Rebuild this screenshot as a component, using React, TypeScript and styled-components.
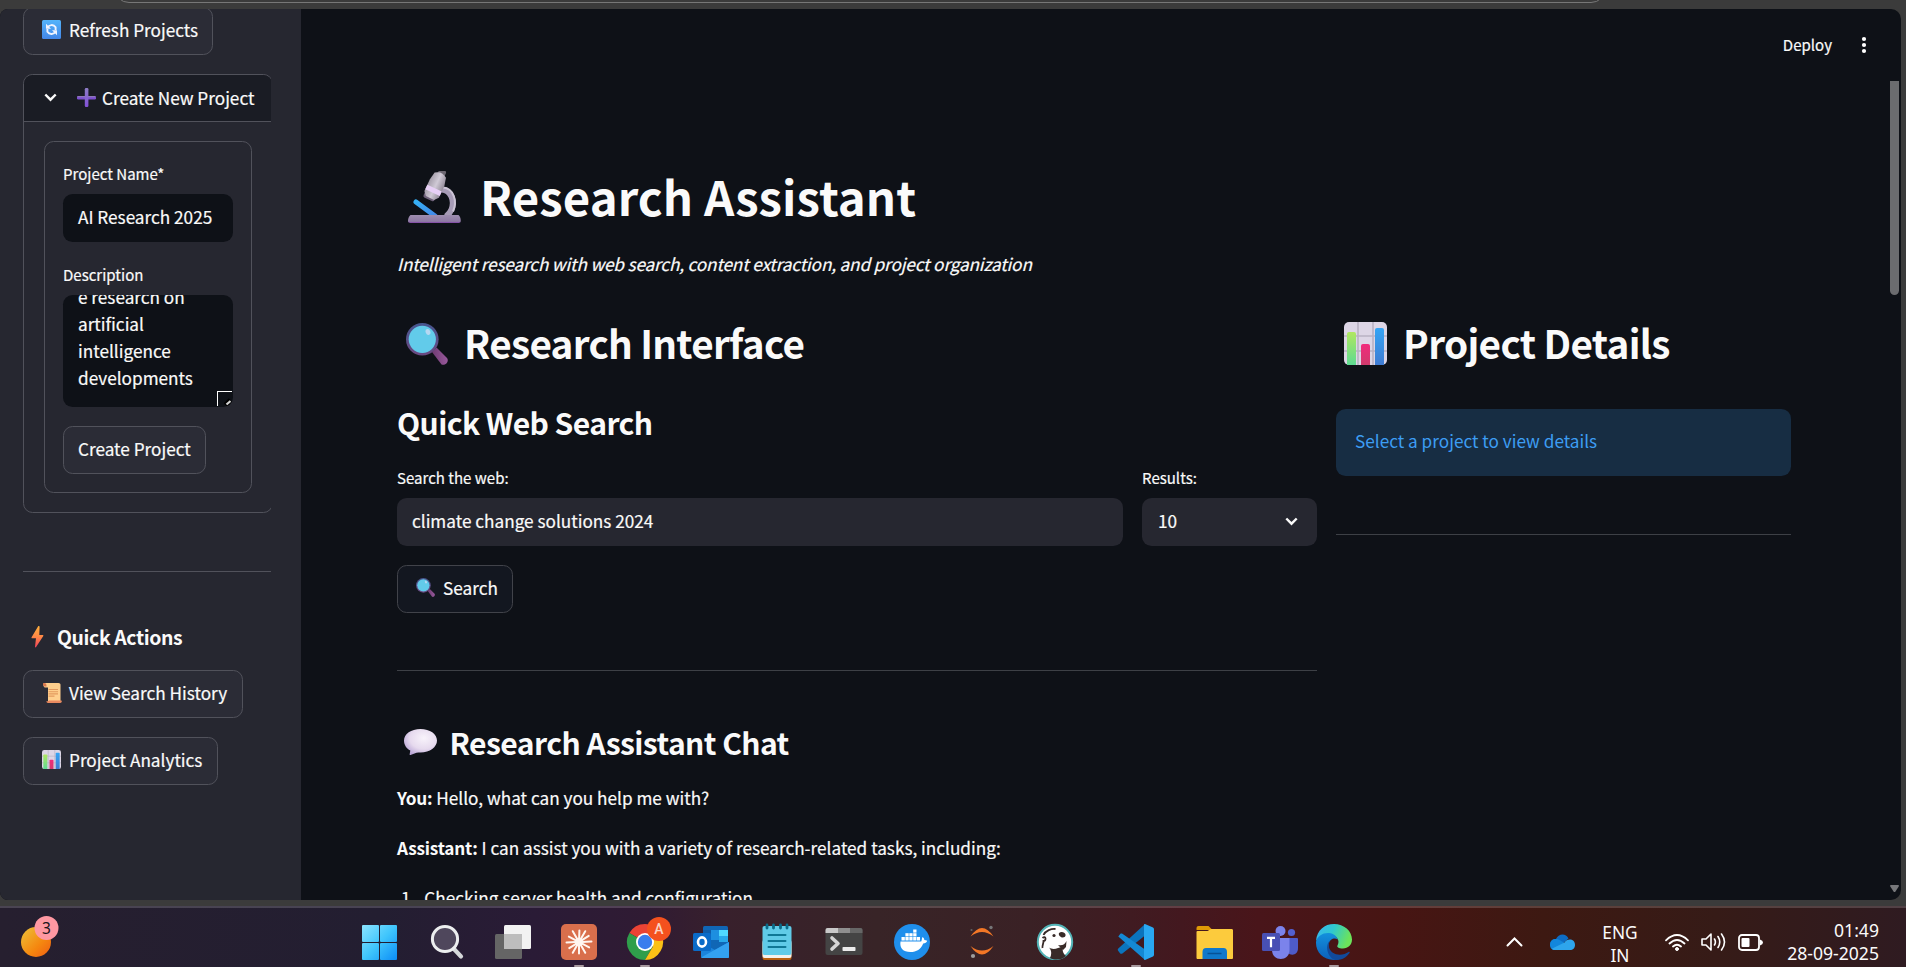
import React from 'react';
import styled, { createGlobalStyle } from 'styled-components';

const GlobalStyle = createGlobalStyle`
  * { box-sizing: border-box; }
  html, body { margin: 0; padding: 0; background: #3b3b3b; overflow: hidden; }
  body { font-family: "Noto Sans CJK SC", "Noto Sans", sans-serif; color: #fafafa; font-size: 17.2px; }
  svg { display: block; flex: none; }
`;

const Screen = styled.div`
  width: 1906px;
  height: 967px;
  display: flex;
  flex-direction: column;
  overflow: hidden;
  background: #3b3b3b;
`;
const Chrome = styled.div`
  height: 9px;
  flex: none;
  padding-left: 114px;
  overflow: hidden;
`;
const AddressBar = styled.div`
  width: 1492px;
  height: 30px;
  margin-top: -27px;
  border: 1px solid #777;
  border-radius: 15px;
`;
const Window = styled.div`
  width: 1901px;
  height: 891px;
  flex: none;
  display: flex;
  overflow: hidden;
  border-radius: 8px 10px 10px 8px;
  background: #0e1117;
  -webkit-text-stroke: 0.2px currentColor;
`;
const Sidebar = styled.aside`
  width: 301px;
  flex: none;
  background: #262730;
  padding-left: 23px;
  display: flex;
  flex-direction: column;
  align-items: flex-start;
`;
const Button = styled.div<{ $w: number; $mt: number; $dark?: boolean; $pl?: number }>`
  width: ${p => p.$w}px;
  height: 48px;
  flex: none;
  margin-top: ${p => p.$mt}px;
  padding: 0 0 ${p => (p.$dark ? 4 : 3)}px ${p => p.$pl ?? 15}px;
  display: flex;
  align-items: center;
  border: 1px solid ${p => (p.$dark ? '#41434a' : '#51525b')};
  border-radius: 9.6px;
  background: ${p => (p.$dark ? '#131720' : '#2b2c36')};
  white-space: nowrap;
`;
const IconSlot = styled.span<{ $l?: number; $w: number; $t?: number }>`
  width: ${p => p.$w}px;
  flex: none;
  padding-left: ${p => p.$l ?? 0}px;
  padding-top: ${p => p.$t ?? 0}px;
`;
const Label = styled.span<{ $ls?: number }>`
  letter-spacing: ${p => p.$ls ?? 0}px;
  white-space: nowrap;
`;
const ExpanderClip = styled.div`
  width: 248px;
  margin-top: 19px;
  overflow: hidden;
  flex: none;
`;
const Expander = styled.section`
  width: 250px;
  height: 439px;
  border: 1px solid #51525b;
  border-radius: 9.6px;
  overflow: hidden;
`;
const ExpanderHead = styled.div`
  height: 47px;
  display: flex;
  align-items: center;
  padding: 0 0 2px 20px;
  background: #1a1c24;
  border-bottom: 1px solid #51525b;
`;
const Form = styled.div`
  width: 208px;
  height: 352px;
  margin: 19px 0 0 20px;
  padding: 20px 18px 0;
  border: 1px solid #51525b;
  border-radius: 9.6px;
`;
const FieldLabel = styled.div<{ $mt?: number }>`
  height: 23px;
  line-height: 23px;
  margin-top: ${p => p.$mt ?? 0}px;
  font-size: 15.04px;
  white-space: nowrap;
`;
const Field = styled.div<{ $mt: number; $bg?: string; $pl?: number }>`
  height: 48px;
  margin-top: ${p => p.$mt}px;
  padding: 0 19px 4px ${p => p.$pl ?? 15}px;
  display: flex;
  align-items: center;
  justify-content: space-between;
  border-radius: 9.6px;
  background: ${p => p.$bg ?? '#262730'};
  white-space: nowrap;
`;
const TextArea = styled.div`
  position: relative;
  height: 112px;
  margin-top: 9px;
  padding-left: 15px;
  border-radius: 9.6px;
  background: #0e1117;
  overflow: hidden;
`;
const TextAreaBody = styled.div`
  margin-top: -11px;
  line-height: 26.88px;
  width: 140px;
`;
const ResizeGrip = styled.div`
  position: absolute;
  right: 1px;
  bottom: 1px;
  width: 15px;
  height: 15px;
  border-left: 1px solid #fff;
  border-top: 1px solid #fff;
`;
const Rule = styled.div<{ $w: number; $mt: number; $side?: boolean }>`
  width: ${p => p.$w}px;
  height: 1px;
  flex: none;
  margin-top: ${p => p.$mt}px;
  background: ${p => (p.$side ? '#51525b' : '#3d4046')};
`;
const SideHeading = styled.div`
  height: 30px;
  margin-top: 49px;
  display: flex;
  align-items: center;
  font-size: 19.4px;
  font-weight: 600;
  letter-spacing: -0.37px;
  -webkit-text-stroke: 0;
`;

const Main = styled.main`
  flex: 1;
  height: 891px;
  overflow: hidden;
`;
const TopBar = styled.header`
  height: 72px;
  display: flex;
  align-items: center;
  justify-content: flex-end;
  padding: 0 22px 1px 0;
  font-size: 15.04px;
  gap: 29px;
`;
const Content = styled.div`
  padding-left: 96px;
`;
const Heading = styled.div<{ $h: number; $mt: number; $fs: number; $ls?: number }>`
  height: ${p => p.$h}px;
  margin-top: ${p => p.$mt}px;
  font-size: ${p => p.$fs}px;
  letter-spacing: ${p => p.$ls ?? 0}px;
  line-height: ${p => p.$h}px;
  font-weight: 600;
  display: flex;
  align-items: center;
  white-space: nowrap;
  -webkit-text-stroke: 0;
`;
const Paragraph = styled.p<{ $mt: number; $ls?: number; $italic?: boolean }>`
  height: 31px;
  line-height: 31px;
  margin: ${p => p.$mt}px 0 0;
  font-style: ${p => (p.$italic ? 'italic' : 'normal')};
  letter-spacing: ${p => p.$ls ?? 0}px;
  white-space: nowrap;
  b { letter-spacing: -0.2px; -webkit-text-stroke: 0; }
`;
const Columns = styled.div`
  display: grid;
  grid-template-columns: 920px 455px;
  column-gap: 19px;
  align-items: start;
`;
const SearchRow = styled.div`
  display: grid;
  grid-template-columns: 726px 175px;
  column-gap: 19px;
`;
const Notice = styled.div`
  height: 67px;
  margin-top: 40px;
  padding: 0 0 4px 19px;
  display: flex;
  align-items: center;
  border-radius: 9.6px;
  background: #172d43;
  color: #3d9df3;
  -webkit-text-stroke: 0;
`;
const ListItem = styled(Paragraph)`
  display: flex;
  gap: 9px;
  padding-left: 4px;
`;
const ScrollTrack = styled.div`
  width: 12px;
  height: 891px;
  flex: none;
  display: flex;
  flex-direction: column;
  align-items: flex-start;
  justify-content: space-between;
  padding: 72px 0 8px 1px;
`;
const ScrollThumb = styled.div`
  width: 9px;
  height: 214px;
  background: #6b6c6f;
  border-radius: 0 0 5px 5px;
`;

const Taskbar = styled.footer`
  height: 61px;
  flex: none;
  margin-top: 6px;
  border-top: 2px solid rgba(255, 255, 255, 0.17);
  background: linear-gradient(90deg, #261f2f 0%, #231e31 20%, #2a1b36 28%, #301b33 34%, #38202c 38%, #382427 46%, #3a2125 54%, #43181f 62%, #49151a 66%, #471513 73%, #3d1912 81%, #361b17 90%, #2f1b21 100%);
  display: flex;
  align-items: flex-start;
  font-family: "Noto Sans", sans-serif;
`;
const TaskItem = styled.div<{ $ml: number; $active?: boolean; $pt?: number }>`
  width: 44px;
  height: 59px;
  flex: none;
  margin-left: ${p => p.$ml}px;
  padding-top: ${p => p.$pt ?? 4}px;
  display: flex;
  flex-direction: column;
  gap: 5px;
  align-items: center;
  &::after {
    content: '';
    width: 10px;
    height: 4px;
    border-radius: 2px;
    background: ${p => (p.$active ? '#a89a9f' : 'transparent')};
  }
`;
const Tray = styled.div`
  margin-left: auto;
  height: 59px;
  display: flex;
  align-items: center;
  padding: 9px 27px 0 0;
  line-height: 23.5px;
`;
const TrayText = styled.div<{ $w: number; $ml: number; $align: string; $pt?: number; $fs?: number }>`
  width: ${p => p.$w}px;
  margin-left: ${p => p.$ml}px;
  padding-top: ${p => p.$pt ?? 0}px;
  font-size: ${p => p.$fs ?? 17.6}px;
  text-align: ${p => p.$align};
  white-space: nowrap;
`;
const TraySlot = styled.div<{ $ml: number }>`
  margin-left: ${p => p.$ml}px;
`;

const RefreshIcon = () => (
  <svg width="19" height="19" viewBox="0 0 19 19">
    <defs><linearGradient id="rf" x1="0" y1="0" x2="0" y2="1"><stop offset="0" stopColor="#54b4fb" /><stop offset="1" stopColor="#4386e8" /></linearGradient></defs>
    <rect width="19" height="19" rx="1.5" fill="url(#rf)" />
    <g fill="none" stroke="#f1f4ff" strokeWidth="1.9">
      <path d="M5.6 7.6C7 4.6 11.5 4 13.6 7.2V10" />
      <path d="M13.6 11.4C12 14.6 7.6 15 5.4 11.8V9" />
    </g>
    <path d="M4 3.8v5h5zM15 15.2v-5h-5z" fill="#f1f4ff" />
  </svg>
);
const PlusIcon = () => (
  <svg width="19" height="19" viewBox="0 0 19 19">
    <defs><linearGradient id="pl" x1="0" y1="0" x2="0" y2="1"><stop offset="0" stopColor="#8d7cc4" /><stop offset="1" stopColor="#8250d8" /></linearGradient></defs>
    <rect x="0" y="8" width="19" height="3.4" rx="1.2" fill="#7d4fd0" />
    <rect x="0.4" y="8" width="18" height="1.3" rx=".6" fill="#8d78b8" />
    <rect x="7.8" y="0" width="3.6" height="19" rx="1.2" fill="url(#pl)" />
  </svg>
);
const BoltIcon = () => (
  <svg width="13" height="22" viewBox="0 0 13 22">
    <defs><linearGradient id="bo" x1="0" y1="0" x2="0" y2="1"><stop offset="0" stopColor="#ffb03c" /><stop offset=".5" stopColor="#ff8746" /><stop offset="1" stopColor="#f2405c" /></linearGradient></defs>
    <path d="M7 .4 .6 11.2c-.3.6 0 1 .6 1H5L4 20.8c0 .9.6 1 1.1.3L12.3 10c.3-.6 0-1-.6-1H8.3L8.6 1c0-1-1.1-1.300-1.600-.6z" fill="url(#bo)" />
  </svg>
);
const ScrollIcon = () => (
  <svg width="19" height="20" viewBox="0 0 19 20">
    <path d="M1 0h14.500c1.200 0 2 .8 2 1.800V18H5V4.500H2C.4 4.500-.2 1 1 0z" fill="#ffcf8d" />
    <path d="M0 .8C0 .3.6 0 1.200 0 3 0 3.500 1 3.500 3.500H1.500C.6 3.500 0 2 0 .8z" fill="#d9774e" />
    <path d="M6 17.500h12.500c.8 1.500-.2 2.500-1.300 2.500H5c-1 0-1.700-1-1.500-2 1 .5 1.800.3 2.500-.5z" fill="#e98a60" />
    <path d="M5.500 6.500h9.500M5.500 8.700h9.500M5.500 10.900h9.500M5.500 13.100h6" stroke="#e39a5e" strokeWidth="1.100" />
  </svg>
);
const ChartIcon = ({ s }: { s: number }) => (
  <svg width={s} height={s} viewBox="0 0 43 43">
    <defs>
      <linearGradient id="cg" x1="0" y1="0" x2="0" y2="1"><stop offset="0" stopColor="#b1e760" /><stop offset="1" stopColor="#5edb92" /></linearGradient>
      <linearGradient id="cb" x1="0" y1="0" x2="0" y2="1"><stop offset="0" stopColor="#35a5f5" /><stop offset="1" stopColor="#3f7bd2" /></linearGradient>
      <linearGradient id="cr" x1="0" y1="0" x2="0" y2="1"><stop offset="0" stopColor="#f12a7c" /><stop offset="1" stopColor="#d13a6c" /></linearGradient>
    </defs>
    <rect width="43" height="43" rx="5" fill="#ddd6e6" />
    <path d="M14 0v43M29 0v43M0 14h43M0 29h43" stroke="#b9b2c4" strokeWidth="1.600" />
    <path d="M3 43V12a2 2 0 0 1 2-2h5a2 2 0 0 1 2 2v31z" fill="url(#cg)" />
    <path d="M17 43V24a2 2 0 0 1 2-2h5a2 2 0 0 1 2 2v19z" fill="url(#cr)" />
    <path d="M31 43V8a2 2 0 0 1 2-2h5a2 2 0 0 1 2 2v35z" fill="url(#cb)" />
  </svg>
);
const GlassIcon = ({ s }: { s: number }) => (
  <svg width={s} height={s} viewBox="0 0 42 42">
    <defs>
      <linearGradient id="gh" x1="0" y1="0" x2="1" y2="0"><stop offset="0" stopColor="#6f3b72" /><stop offset="1" stopColor="#98599c" /></linearGradient>
      <linearGradient id="gr" x1="0" y1="0" x2="0" y2="1"><stop offset="0" stopColor="#46568f" /><stop offset="1" stopColor="#6b4880" /></linearGradient>
    </defs>
    <path d="M26 29l4.500-4.500 10.500 10.500c2.500 3-1.500 8-5.500 6.500z" fill="url(#gh)" />
    <circle cx="16.300" cy="16.300" r="16.300" fill="url(#gr)" />
    <circle cx="16.300" cy="16.300" r="13.600" fill="#62cbea" />
    <ellipse cx="22" cy="9" rx="2.300" ry="3" fill="#b6d8f2" transform="rotate(-25 22 9)" />
  </svg>
);
const MicroscopeIcon = () => (
  <svg width="53" height="52" viewBox="0 0 53 52">
    <defs>
      <linearGradient id="mb" x1="0" y1="0" x2="1" y2="0"><stop offset="0" stopColor="#a49daa" /><stop offset=".5" stopColor="#d0cad6" /><stop offset="1" stopColor="#948c9a" /></linearGradient>
      <linearGradient id="ms" x1="0" y1="0" x2="0" y2="1"><stop offset="0" stopColor="#9e8eb0" /><stop offset=".8" stopColor="#8e7aa4" /><stop offset="1" stopColor="#8040a8" /></linearGradient>
      <linearGradient id="ml" x1="0" y1="0" x2="1" y2="1"><stop offset="0" stopColor="#35b0f5" /><stop offset="1" stopColor="#4388e8" /></linearGradient>
    </defs>
    <path d="M34 18.500c9 1 13 11 9.500 20-1 2.500-3 5-5.500 7" fill="none" stroke="#a69bb6" strokeWidth="6" />
    <path d="M35 16.500c11 1 14.500 14 10 24" fill="none" stroke="#cbc3d4" strokeWidth="2" />
    <path d="M8 31l19 14" stroke="url(#ml)" strokeWidth="5" strokeLinecap="round" />
    <path d="M2.500 44h48c1.500 1 2.500 4 2.200 6.300-.1 1-.8 1.700-2 1.700H2.300C1 52 .2 51.500 0 50.300-.2 48 1 45 2.500 44z" fill="url(#ms)" />
    <g transform="rotate(25 27 15)">
      <rect x="24" y="-3" width="7.500" height="8" rx="2" fill="#6d6872" />
      <rect x="20.500" y="23" width="12" height="7" rx="2" fill="#6d6078" />
      <path d="M21 3q6-5 12.500 0l2 8v13l-3.500 4h-9l-3.500-4V11z" fill="url(#mb)" />
      <path d="M19.500 17h16v5h-16z" fill="#e7d0f6" />
    </g>
  </svg>
);
const BubbleIcon = () => (
  <svg width="33" height="26" viewBox="0 0 33 26">
    <defs><radialGradient id="bu" cx=".6" cy=".35" r=".7"><stop offset="0" stopColor="#f8f3fb" /><stop offset=".6" stopColor="#e6daee" /><stop offset="1" stopColor="#b9a5d6" /></radialGradient></defs>
    <path d="M16.500 0C26 0 33 5 33 11.500S26 23.500 16.500 23.500c-1.500 0-2.700 0-4 .2L6.500 26c-.8.200-1-.300-.8-1l.6-3.500C2.500 19.500 0 16 0 11.500 0 5 7 0 16.500 0z" fill="url(#bu)" />
  </svg>
);
const Chevron = () => (
  <svg width="13" height="9" viewBox="0 0 13 9"><path d="M1.300 1.500l5.200 5.200 5.200-5.200" fill="none" stroke="#fafafa" strokeWidth="2.400" /></svg>
);

const Ico = ({ children }: { children: React.ReactNode }) => (
  <svg width="44" height="48" viewBox="0 0 44 48">{children}</svg>
);
const StartIcon = () => (
  <Ico>
    <defs><linearGradient id="wn" gradientUnits="userSpaceOnUse" x1="4" y1="13" x2="40" y2="48"><stop offset="0" stopColor="#8be4ff" /><stop offset=".5" stopColor="#3fc5fc" /><stop offset="1" stopColor="#0a8bf6" /></linearGradient></defs>
    <g fill="url(#wn)"><rect x="4" y="13" width="17" height="17" rx="1" /><rect x="22" y="13" width="17" height="17" rx="1" /><rect x="4" y="31" width="17" height="17" rx="1" /><rect x="22" y="31" width="17" height="17" rx="1" /></g>
  </Ico>
);
const SearchTaskIcon = () => (
  <Ico>
    <path d="M29 37l7 7.500" stroke="#d5d8da" strokeWidth="4.200" strokeLinecap="round" />
    <circle cx="20" cy="27" r="12.600" fill="#4f475c" stroke="#eceeef" strokeWidth="3" />
  </Ico>
);
const TaskViewIcon = () => (
  <Ico>
    <rect x="4" y="22" width="27" height="25" rx="1.500" fill="#656565" />
    <rect x="13" y="13" width="27" height="24" rx="1.500" fill="#f2f2f2" />
    <path d="M13 22h18v15H14q-1 0-1-1z" fill="#bdbdbd" />
  </Ico>
);
const ClaudeIcon = () => (
  <Ico>
    <rect x="4" y="12" width="36" height="36" rx="5" fill="#d96f4c" />
    <g stroke="#fff6f0" strokeWidth="2" strokeLinecap="round">
      {[2, 30, 58, 88, 118, 150, 180, 210, 238, 268, 298, 330].map((a, i) => (
        <path key={a} d={`M22 27V${i % 2 ? 17.5 : 18.5}`} transform={`rotate(${a} 22 30)`} />
      ))}
    </g>
    <circle cx="22" cy="30" r="4" fill="#fff6f0" />
  </Ico>
);
const ChromeIcon = () => (
  <svg width="56" height="48" viewBox="0 0 56 48">
    <path d="M28 30L12.400 21A18 18 0 0 1 43.600 21z" fill="#ea4335" />
    <path d="M28 30L12.400 21A18 18 0 0 0 28 48l8-13.500z" fill="#2f9e4b" />
    <path d="M28 30L43.600 21A18 18 0 0 1 28 48l8-13.500z" fill="#fbc116" />
    <path d="M28 21h15.600l1 2H28z" fill="#ea4335" />
    <circle cx="28" cy="30" r="9" fill="#fff" /><circle cx="28" cy="30" r="7.200" fill="#3b7ded" />
    <circle cx="42" cy="17" r="12" fill="#f4511e" />
    <text x="42" y="22" textAnchor="middle" fontSize="14" fontWeight="500" fontFamily="Roboto" fill="#fbd3c4">A</text>
  </svg>
);
const OutlookIcon = () => (
  <Ico>
    <rect x="14" y="14" width="25" height="24" rx="1.500" fill="#1066b5" />
    <path d="M14 18h8v10h-8z" fill="#0f5ca8" /><path d="M22 18h8v10h-8z" fill="#1d8fe0" /><path d="M30 18h9v6h-9z" fill="#50d9ff" /><path d="M30 24h9v6h-9z" fill="#28a8ea" />
    <path d="M12 30l14 8 14-8v14.500c0 1-.6 1.500-1.500 1.500h-25c-1 0-1.500-.6-1.500-1.500z" fill="#1a84dc" />
    <path d="M12 45.500L40 30v14.500c0 1-.6 1.500-1.500 1.500h-25z" fill="#33a1f0" />
    <rect x="4" y="21" width="18" height="18" rx="1.500" fill="#0a6bc8" />
    <ellipse cx="13" cy="30" rx="4" ry="4.600" fill="none" stroke="#fff" strokeWidth="2.600" />
  </Ico>
);
const NotepadIcon = () => (
  <Ico>
    <rect x="7.500" y="30" width="29" height="18" rx="2" fill="#b9600f" /><rect x="7.500" y="28" width="29" height="18" rx="2" fill="#f4f1ec" />
    <rect x="7.500" y="14" width="29" height="29" rx="2" fill="#60cbe8" />
    <path d="M12 13v3M18.500 13v3M25.500 13v3M32 13v3" stroke="#0b6b88" strokeWidth="2.800" strokeLinecap="round" />
    <path d="M13.500 23h17M13.500 29h17M13.500 35h17" stroke="#0f7896" strokeWidth="2" strokeLinecap="round" />
  </Ico>
);
const TerminalIcon = () => (
  <Ico>
    <rect x="3.500" y="16" width="37" height="27" rx="2" fill="#444" />
    <path d="M3.500 21v-3q0-2 2-2H16v5z" fill="#c9c9c9" /><path d="M16 16h12v5H16z" fill="#8f8f8f" /><path d="M28 16h10.500q2 0 2 2v3H28z" fill="#666" />
    <path d="M10 26l6 5.500-6 5.500" fill="none" stroke="#d4d4d4" strokeWidth="3.600" strokeLinecap="round" strokeLinejoin="round" />
    <rect x="20.500" y="35" width="13" height="4" rx=".8" fill="#ececec" />
  </Ico>
);
const DockerIcon = () => (
  <Ico>
    <circle cx="22" cy="30" r="18" fill="#1f8fec" />
    <path d="M10.500 29.500h20.700c.8-1 .4-3 1.300-4.500 1.500.8 1.800 2 1.800 3 1 0 2 .2 2.900.8-.6 1.800-2 2.600-4 2.600C31 37 26.500 40 20.500 40 13 40 9.500 36 10.500 29.500z" fill="#fff" />
    <g fill="#fff"><rect x="11.500" y="25" width="3.300" height="3.500" /><rect x="15.400" y="25" width="3.300" height="3.500" /><rect x="19.300" y="25" width="3.300" height="3.500" /><rect x="23.200" y="25" width="3.300" height="3.500" /><rect x="27" y="25" width="3" height="3.500" /><rect x="15.400" y="21.200" width="3.300" height="3.200" /><rect x="19.300" y="21.200" width="3.300" height="3.200" /><rect x="23.200" y="21.200" width="3.300" height="3.200" /><rect x="23.200" y="17.500" width="3.300" height="3.100" /></g>
  </Ico>
);
const JupyterIcon = () => (
  <Ico>
    <path d="M10.500 24.500q11.500-17 23 0-11.500-9-23 0z" fill="#f37726" /><path d="M10.500 34q11.500 17 23 0-11.500 9-23 0z" fill="#f37726" />
    <circle cx="31" cy="15.500" r="1.700" fill="#767677" /><circle cx="13" cy="44" r="2.100" fill="#9e9e9e" /><circle cx="11.500" cy="18" r="1.100" fill="#616262" />
  </Ico>
);
const BeaverIcon = () => (
  <Ico>
    <circle cx="22" cy="30" r="17.200" fill="#fff" stroke="#52b3b6" strokeWidth="2" />
    <path d="M10.500 23c2-4.500 8-6.500 12-6M9.500 26c1.500-1.500 3-1 3 .5s-1 2.500-2 2.500c0 3-1.500 4.500-1 7" fill="none" stroke="#382b28" strokeWidth="1.800" />
    <path d="M26 21c2.500-2 6-.5 6.500 1.500s-1 3-3 3S25 23 26 21z" fill="#382b28" /><circle cx="21" cy="23.500" r="1.600" fill="#382b28" />
    <path d="M17 46c2-4 1.500-8-1-10.500 3 2 6 1.500 9 .5l5-1.500c-1 4 0 7 3 9.500-4 4-11 4.500-16 2z" fill="#382b28" />
    <path d="M25 33c4 1 7-.5 8.500-4l-.5 6-3 3z" fill="#382b28" />
  </Ico>
);
const CodeIcon = () => (
  <Ico>
    <path d="M30 13L4.300 36.500c-.7.700-.7 1.700 0 2.500l1.900 2.400c.6.600 1.500.600 2.200.1L31 23.500z" fill="#0b74bd" />
    <path d="M4.300 24.500l1.900-2.600c.6-.6 1.500-.6 2.200-.1L31 37.500V48z" fill="#1489d4" />
    <path d="M30 12.300l1-.3 8 3.500c.7.400 1 .9 1 1.700v25.600c0 .8-.4 1.300-1 1.700L31 48l-1-.6z" fill="#29a8f2" />
  </Ico>
);
const FolderIcon = () => (
  <Ico>
    <path d="M3.500 16q0-2 2-2h10l4 4h-16z" fill="#df9a06" /><path d="M3.500 20q0-1 1-1h10l3.500-2H39q1 0 1 1.500V46q0 1-1 1H4.500q-1 0-1-1z" fill="#fccb3d" />
    <path d="M9.500 47v-7q0-4 3.500-4h17.500q3.500 0 3.500 4v7z" fill="#0f78cb" /><path d="M14.500 41.500h14" stroke="#075296" strokeWidth="1.500" />
  </Ico>
);
const TeamsIcon = () => (
  <Ico>
    <circle cx="33.500" cy="20.500" r="3.600" fill="#5360cf" /><circle cx="22.500" cy="19" r="5" fill="#7b83eb" />
    <path d="M29 26h10q1 0 1 1v9c0 8-8 8-11 4z" fill="#4e5bc8" />
    <path d="M14 26h17.500V38c0 12-17.500 12-17.500 0z" fill="#7b83eb" />
    <rect x="4" y="21" width="18" height="18" rx="1.500" fill="#4850b4" />
    <path d="M9 25.800h8M13 25.800v9.500" stroke="#fff" strokeWidth="2.200" />
  </Ico>
);
const EdgeIcon = () => (
  <Ico>
    <defs>
      <linearGradient id="e1" x1="0" y1="0" x2="1" y2=".3"><stop offset="0" stopColor="#39b4f4" /><stop offset=".5" stopColor="#2fc8ce" /><stop offset="1" stopColor="#6ce35a" /></linearGradient>
      <linearGradient id="e2" x1="0" y1="0" x2="0" y2="1"><stop offset="0" stopColor="#1391dd" /><stop offset="1" stopColor="#0d5fba" /></linearGradient>
    </defs>
    <path d="M4 29C5 18 12.500 12 22 12c10 0 18 7 18 15.500C40 33 36 36.500 31 36.500c-4.500 0-6.500-1.500-5.500-3 3-5-1-10.500-7-10.500-6.500 0-12 2-14.500 6z" fill="url(#e1)" />
    <path d="M4 30C5 24 11 20.500 17 21c5 .3 8 3.500 8.500 6.500-2-2-8-1.500-9 5.500-.8 6.500 5.500 13 11 14.300C14 50.500 3.500 42 4 30z" fill="url(#e2)" />
    <path d="M18 28.500c-3 5-.5 12 6 13.800 5 1.200 9.500-.3 12.500-2.300 1-.6 1.600.2 1 1C34 46 29 48.200 23.500 48 16 46.500 12 34 18 28.500z" fill="#114a9c" />
  </Ico>
);
const WeatherIcon = () => (
  <svg width="40" height="46" viewBox="0 0 40 46">
    <defs><linearGradient id="we" x1="0" y1="0" x2="1" y2="1"><stop offset="0" stopColor="#ecc33a" /><stop offset=".6" stopColor="#f5870f" /><stop offset="1" stopColor="#ef5c13" /></linearGradient></defs>
    <circle cx="16" cy="28" r="15" fill="url(#we)" />
    <circle cx="26.500" cy="14" r="12" fill="#ff98a2" />
    <text x="26.500" y="19.500" textAnchor="middle" fontSize="15.500" fontFamily="Noto Sans" fill="#20141a">3</text>
  </svg>
);

const taskItems: { ml: number; icon: React.ReactNode; active?: boolean }[] = [
  { ml: 296, icon: <StartIcon /> },
  { ml: 23, icon: <SearchTaskIcon /> },
  { ml: 22, icon: <TaskViewIcon /> },
  { ml: 22, icon: <ClaudeIcon />, active: true },
  { ml: 22, icon: <ChromeIcon />, active: true },
  { ml: 22, icon: <OutlookIcon /> },
  { ml: 22, icon: <NotepadIcon /> },
  { ml: 23, icon: <TerminalIcon /> },
  { ml: 24, icon: <DockerIcon /> },
  { ml: 26, icon: <JupyterIcon /> },
  { ml: 29, icon: <BeaverIcon /> },
  { ml: 37, icon: <CodeIcon />, active: true },
  { ml: 35, icon: <FolderIcon /> },
  { ml: 21, icon: <TeamsIcon /> },
  { ml: 10, icon: <EdgeIcon />, active: true },
];

export default function App() {
  return (
    <Screen>
      <GlobalStyle />
      <Chrome><AddressBar /></Chrome>
      <Window>
        <Sidebar>
          <Button $w={190} $mt={-2}>
            <IconSlot $w={30} $l={3}><RefreshIcon /></IconSlot>
            <Label>Refresh Projects</Label>
          </Button>
          <ExpanderClip>
            <Expander>
              <ExpanderHead>
                <IconSlot $w={32}><Chevron /></IconSlot>
                <IconSlot $w={26} $l={0.5}><PlusIcon /></IconSlot>
                <Label>Create New Project</Label>
              </ExpanderHead>
              <Form>
                <FieldLabel>Project Name*</FieldLabel>
                <Field $mt={9} $bg="#0e1117"><Label>AI Research 2025</Label></Field>
                <FieldLabel $mt={21}>Description</FieldLabel>
                <TextArea>
                  <TextAreaBody>e research on<br />artificial<br />intelligence<br />developments</TextAreaBody>
                  <ResizeGrip>
                    <svg width="14" height="14" viewBox="0 0 14 14"><path d="M7.500 13l5-5" stroke="#000" strokeWidth="5" /><path d="M8.500 12.500l4-3.500" stroke="#d5d5d5" strokeWidth="2.200" /></svg>
                  </ResizeGrip>
                </TextArea>
                <Button $w={143} $mt={19} $pl={14}><Label>Create Project</Label></Button>
              </Form>
            </Expander>
          </ExpanderClip>
          <Rule $w={248} $mt={58} $side />
          <SideHeading>
            <IconSlot $w={34} $l={8} $t={1}><BoltIcon /></IconSlot>
            <Label $ls={-0.37}>Quick Actions</Label>
          </SideHeading>
          <Button $w={220} $mt={19}>
            <IconSlot $w={30} $l={4}><ScrollIcon /></IconSlot>
            <Label>View Search History</Label>
          </Button>
          <Button $w={195} $mt={19}>
            <IconSlot $w={30} $l={3}><ChartIcon s={19} /></IconSlot>
            <Label>Project Analytics</Label>
          </Button>
        </Sidebar>
        <Main>
          <TopBar>
            <Label>Deploy</Label>
            <svg width="6" height="18" viewBox="0 0 6 18"><g fill="#fff"><circle cx="3" cy="3" r="2.100" /><circle cx="3" cy="9" r="2.100" /><circle cx="3" cy="15" r="2.100" /></g></svg>
          </TopBar>
          <Content>
            <Heading $h={63} $mt={83} $fs={47.3} $ls={0.06}>
              <IconSlot $w={83} $l={10.5} $t={3}><MicroscopeIcon /></IconSlot>
              <span>Research Assistant</span>
            </Heading>
            <Paragraph $mt={21} $italic $ls={-0.15}>Intelligent research with web search, content extraction, and project organization</Paragraph>
            <Columns>
              <div>
                <Heading $h={53} $mt={37} $fs={38.7} $ls={-0.72}>
                  <IconSlot $w={67} $l={9} $t={3}><GlassIcon s={42} /></IconSlot>
                  <span>Research Interface</span>
                </Heading>
                <Heading $h={40} $mt={33} $fs={30.1} $ls={-0.6}>Quick Web Search</Heading>
                <SearchRow>
                  <div>
                    <FieldLabel $mt={24}>Search the web:</FieldLabel>
                    <Field $mt={9}><Label>climate change solutions 2024</Label></Field>
                  </div>
                  <div>
                    <FieldLabel $mt={24}>Results:</FieldLabel>
                    <Field $mt={9} $pl={16}><Label>10</Label><IconSlot $w={13} $t={3}><Chevron /></IconSlot></Field>
                  </div>
                </SearchRow>
                <Button $w={116} $mt={19} $dark>
                  <IconSlot $w={30} $l={3}><GlassIcon s={19} /></IconSlot>
                  <Label>Search</Label>
                </Button>
                <Rule $w={920} $mt={57} />
                <Heading $h={40} $mt={51} $fs={30.1} $ls={-0.58}>
                  <IconSlot $w={52.5} $l={7}><BubbleIcon /></IconSlot>
                  <span>Research Assistant Chat</span>
                </Heading>
                <Paragraph $mt={20}><b>You:</b> Hello, what can you help me with?</Paragraph>
                <Paragraph $mt={19}><b>Assistant:</b> I can assist you with a variety of research-related tasks, including:</Paragraph>
                <ListItem $mt={19}><span>1.</span><span>Checking server health and configuration</span></ListItem>
              </div>
              <div>
                <Heading $h={53} $mt={37} $fs={38.7} $ls={-0.66}>
                  <IconSlot $w={67} $l={8} $t={2}><ChartIcon s={43} /></IconSlot>
                  <span>Project Details</span>
                </Heading>
                <Notice><Label>Select a project to view details</Label></Notice>
                <Rule $w={455} $mt={58} />
              </div>
            </Columns>
          </Content>
        </Main>
        <ScrollTrack>
          <ScrollThumb />
          <svg width="9" height="7" viewBox="0 0 9 7"><path d="M0 1q0-1 1-1h7q1 0 1 1L5.500 6.500q-1 1-2 0z" fill="#77787b" /></svg>
        </ScrollTrack>
      </Window>
      <Taskbar>
        <TaskItem $ml={18} $pt={6}><WeatherIcon /></TaskItem>
        {taskItems.map((t, i) => (
          <TaskItem key={i} $ml={t.ml} $active={t.active}>{t.icon}</TaskItem>
        ))}
        <Tray>
          <svg width="17" height="10" viewBox="0 0 17 10"><path d="M1.500 8.500l7-7 7 7" fill="none" stroke="#fff" strokeWidth="2" strokeLinecap="round" /></svg>
          <TraySlot $ml={27}>
            <svg width="25" height="16" viewBox="0 0 25 16">
              <path d="M6 5C8-.5 16-1.500 18.500 4.500L10 12H1C-1 8 2 4.500 6 5z" fill="#0d6cc4" />
              <path d="M0 11C0 7 3 4.500 6.500 5c2 .2 3.500 1.200 8 4L5 16C2 16 0 14 0 11z" fill="#1286dc" />
              <path d="M14.500 8.500c2-4 10.500-4.500 10.500 2.500 0 3-2 5-5 5H5c-1.300 0-2.500-.4-3.300-1.200z" fill="#2ea5ec" />
            </svg>
          </TraySlot>
          <TrayText $w={50} $ml={20} $align="center" $pt={4} $fs={17.3}>ENG<br />IN</TrayText>
          <TraySlot $ml={20}>
            <svg width="24" height="17" viewBox="0 0 24 17" fill="none" stroke="#fff" strokeWidth="1.800" strokeLinecap="round">
              <path d="M1 6.300q11-10.500 22 0M4.500 9.500q7.500-7 15 0M8 12.500q4-3.600 8 0" /><circle cx="12" cy="15" r="1.500" fill="#fff" strokeWidth="1" />
            </svg>
          </TraySlot>
          <TraySlot $ml={12}>
            <svg width="25" height="20" viewBox="0 0 25 20" fill="none" stroke="#fff" strokeWidth="1.600" strokeLinecap="round" strokeLinejoin="round">
              <path d="M1 7h4l5-5v16l-5-5H1z" /><path d="M13.500 7q1.800 3 0 6M17 4.500q3.500 5.500 0 11M20.500 2q6 8 0 16" />
            </svg>
          </TraySlot>
          <TraySlot $ml={12}>
            <svg width="25" height="17" viewBox="0 0 25 17">
              <rect x="1" y="1" width="20" height="15" rx="3" fill="none" stroke="#fff" strokeWidth="1.800" /><rect x="3.500" y="4" width="8" height="9" rx="1" fill="#fff" /><path d="M22 5.500q3 1 3 3t-3 3z" fill="#fff" />
            </svg>
          </TraySlot>
          <TrayText $w={99} $ml={17} $align="right">01:49<br />28-09-2025</TrayText>
        </Tray>
      </Taskbar>
    </Screen>
  );
}
